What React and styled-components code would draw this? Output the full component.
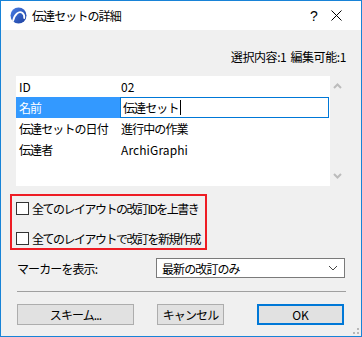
import React from "react";
import styled, { createGlobalStyle } from "styled-components";

const GlobalStyle = createGlobalStyle`
  html, body {
    margin: 0;
    padding: 0;
    background: #ffffff;
  }
  * {
    box-sizing: border-box;
  }
`;

const Window = styled.div`
  position: relative;
  width: 362px;
  height: 337px;
  border: 1px solid #1883d7;
  display: flex;
  flex-direction: column;
  font-family: "Noto Sans CJK JP", "Noto Sans", sans-serif;
  font-size: 12px;
  letter-spacing: -0.9px;
  white-space: nowrap;
  color: #000;
  overflow: hidden;
`;

const TitleBar = styled.div`
  height: 29px;
  background: #fff;
  display: flex;
  align-items: center;
  padding-left: 9px;
`;

const TitleText = styled.span`
  margin-left: 5px;
  line-height: 16px;
  flex: 1;
`;

const TitleBtn = styled.span`
  width: ${(p) => p.$w}px;
  text-align: center;
  font-size: ${(p) => p.$fs || 12}px;
  line-height: 16px;
  letter-spacing: 0;
  font-family: "Liberation Sans", sans-serif;
`;

const Body = styled.div`
  flex: 1;
  background: #f0f0f0;
  padding: 0 15px;
  display: flex;
  flex-direction: column;
`;

const Status = styled.div`
  margin-top: 19px;
  display: flex;
  justify-content: flex-end;
  gap: 4px;
  line-height: 16px;
  height: 16px;
  letter-spacing: -0.4px;
`;

const ListWrap = styled.div`
  margin-top: 11px;
  height: 110px;
  display: flex;
`;

const List = styled.div`
  width: 314px;
  background: #fff;
`;

const ScrollCol = styled.div`
  width: 15px;
  display: flex;
  flex-direction: column;
  justify-content: space-between;
  align-items: center;
  padding: 7px 0 7px 0;
`;

const Row = styled.div`
  height: 21px;
  display: flex;
  align-items: stretch;
`;

const Key = styled.div`
  width: 104px;
  padding-left: 3px;
  display: flex;
  align-items: center;
  letter-spacing: ${(p) => (p.$latin ? "0" : "-0.9px")};
  background: ${(p) => (p.$sel ? "#3399ff" : "transparent")};
  color: ${(p) => (p.$sel ? "#fff" : "#000")};
`;

const Val = styled.div`
  flex: 1;
  padding-left: 1px;
  display: flex;
  align-items: center;
  letter-spacing: ${(p) => (p.$latin ? "0.1px" : "-0.9px")};
`;

const EditBox = styled.div`
  flex: 1;
  margin-right: 1px;
  border: 1px solid #0078d7;
  padding-left: 2px;
  display: flex;
  align-items: center;
`;

const Caret = styled.span`
  display: inline-block;
  width: 1px;
  height: 15px;
  background: #000;
  margin-left: 1px;
`;

const RedBox = styled.div`
  margin-top: 8px;
  margin-left: -6px;
  width: 197px;
  height: 56px;
  border: 2px solid #ee1c24;
  padding: 6px 0 0 4px;
  display: flex;
  flex-direction: column;
  gap: 17px;
`;

const CheckRow = styled.label`
  display: flex;
  align-items: center;
  height: 13px;
  line-height: 16px;
  letter-spacing: -1.5px;
`;

const Box = styled.span`
  width: 13px;
  height: 13px;
  border: 1px solid #333;
  background: #fff;
  margin-right: 3px;
  flex-shrink: 0;
`;

const MarkerRow = styled.div`
  margin-top: 8px;
  height: 20px;
  display: flex;
  align-items: center;
`;

const MarkerLabel = styled.span`
  width: 140px;
  padding-left: 1px;
`;

const Select = styled.div`
  width: 189px;
  height: 20px;
  border: 1px solid #7a7a7a;
  background: #fff;
  display: flex;
  align-items: center;
  justify-content: space-between;
  padding: 0 6px 0 5px;
`;

const Separator = styled.div`
  margin-top: 13px;
  height: 1px;
  width: 329px;
  margin-left: 1px;
  background: #a0a0a0;
`;

const ButtonRow = styled.div`
  margin-top: 12px;
  display: flex;
`;

const Button = styled.div`
  width: ${(p) => p.$w}px;
  margin-left: ${(p) => p.$ml}px;
  height: 21px;
  background: #e1e1e1;
  border: ${(p) => (p.$primary ? "2px solid #0078d7" : "1px solid #adadad")};
  display: flex;
  align-items: center;
  justify-content: center;
  line-height: 16px;
  letter-spacing: ${(p) => (p.$latin ? "0" : "-0.9px")};
`;

const Grip = styled.div`
  position: absolute;
  right: 2px;
  bottom: 2px;
  width: 10px;
  height: 10px;
`;

const AppIcon = () => (
  <svg width="17" height="17" viewBox="0 0 17 17">
    <defs>
      <linearGradient id="ig" x1="0" y1="0" x2="1" y2="1">
        <stop offset="0" stopColor="#4a7fe6" />
        <stop offset="1" stopColor="#1c3f9e" />
      </linearGradient>
    </defs>
    <circle cx="8.5" cy="8.5" r="8" fill="url(#ig)" />
    <path
      d="M3 14 C4.5 7, 9 3.5, 12.5 6 C14 7.2, 14.5 9, 14.2 11"
      fill="none"
      stroke="#fff"
      strokeWidth="1.8"
      strokeLinecap="round"
    />
  </svg>
);

const Chevron = ({ up }) => (
  <svg width="9" height="6" viewBox="0 0 9 6">
    <path
      d={up ? "M1 5 L4.5 1.5 L8 5" : "M1 1 L4.5 4.5 L8 1"}
      fill="none"
      stroke="#bcbcbc"
      strokeWidth="2"
    />
  </svg>
);

const rows = [
  { k: "ID", v: "02", kl: true, vl: true },
  { k: "名前", v: "伝達セット", sel: true },
  { k: "伝達セットの日付", v: "進行中の作業" },
  { k: "伝達者", v: "ArchiGraphi", vl: true },
];

function App() {
  return (
    <>
      <GlobalStyle />
      <Window>
        <TitleBar>
          <AppIcon />
          <TitleText>伝達セットの詳細</TitleText>
          <TitleBtn $w={14} $fs={14}>?</TitleBtn>
          <TitleBtn $w={30} $fs={16} style={{ marginRight: 10 }}>
            <svg width="11" height="11" viewBox="0 0 11 11">
              <path d="M0.5 0.5 L10.5 10.5 M10.5 0.5 L0.5 10.5" stroke="#000" strokeWidth="1" />
            </svg>
          </TitleBtn>
        </TitleBar>
        <Body>
          <Status>
            <span>選択内容:1</span>
            <span>編集可能:1</span>
          </Status>
          <ListWrap>
            <List>
              {rows.map((r) => (
                <Row key={r.k}>
                  <Key $sel={r.sel} $latin={r.kl}>{r.k}</Key>
                  {r.sel ? (
                    <EditBox>
                      {r.v}
                      <Caret />
                    </EditBox>
                  ) : (
                    <Val $latin={r.vl}>{r.v}</Val>
                  )}
                </Row>
              ))}
            </List>
            <ScrollCol>
              <Chevron up />
              <Chevron />
            </ScrollCol>
          </ListWrap>
          <RedBox>
            <CheckRow>
              <Box />
              全てのレイアウトの改訂IDを上書き
            </CheckRow>
            <CheckRow>
              <Box />
              全てのレイアウトで改訂を新規作成
            </CheckRow>
          </RedBox>
          <MarkerRow>
            <MarkerLabel>マーカーを表示:</MarkerLabel>
            <Select>
              <span>最新の改訂のみ</span>
              <svg width="10" height="6" viewBox="0 0 10 6">
                <path d="M1 1 L5 5 L9 1" fill="none" stroke="#444" strokeWidth="1" />
              </svg>
            </Select>
          </MarkerRow>
          <Separator />
          <ButtonRow>
            <Button $w={117} $ml={1}>スキーム...</Button>
            <Button $w={67} $ml={23}>キャンセル</Button>
            <Button $w={87} $ml={33} $primary $latin>OK</Button>
          </ButtonRow>
        </Body>
        <Grip>
          <svg width="10" height="10" viewBox="0 0 10 10" fill="#b8b8b8">
            <rect x="8" y="0" width="2" height="2" />
            <rect x="4" y="4" width="2" height="2" />
            <rect x="8" y="4" width="2" height="2" />
            <rect x="0" y="8" width="2" height="2" />
            <rect x="4" y="8" width="2" height="2" />
            <rect x="8" y="8" width="2" height="2" />
          </svg>
        </Grip>
      </Window>
    </>
  );
}

export default App;
